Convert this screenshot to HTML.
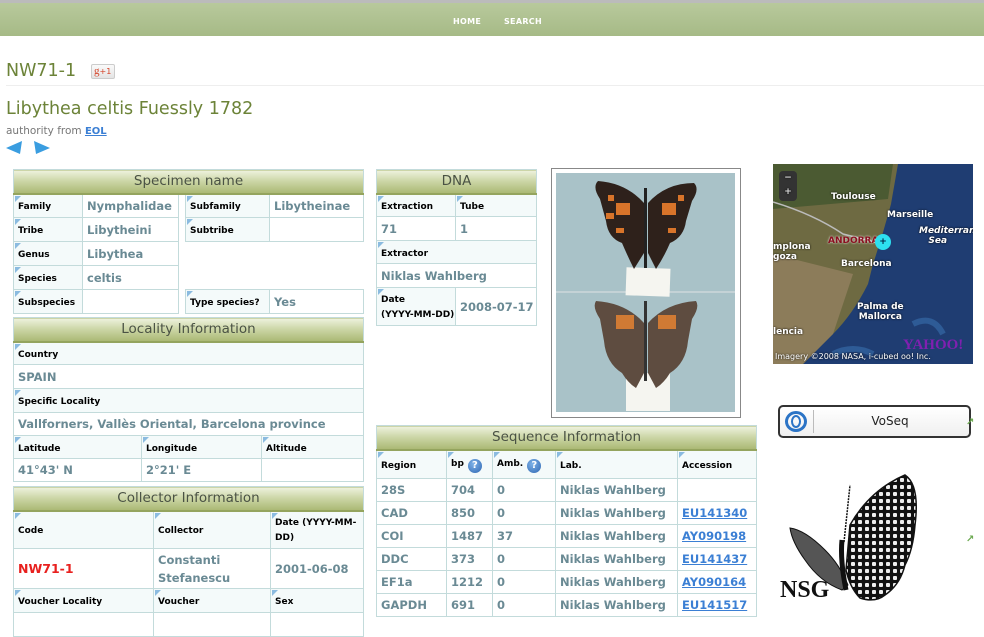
<!DOCTYPE html>
<html><head><meta charset="utf-8"><style>
*{margin:0;padding:0;box-sizing:border-box}
body{width:984px;height:615px;overflow:hidden;background:#fff;font-family:"DejaVu Sans","Liberation Sans",sans-serif;position:relative}
.a{position:absolute}
.nav{left:0;top:0;width:984px;height:36px;background:linear-gradient(#b8c99c,#a6ba86);border-top:3px solid #bbb}
.nav span{position:absolute;top:14px;color:#fff;font-size:8px;font-weight:bold;letter-spacing:.3px}
table{position:absolute;border-collapse:collapse;table-layout:fixed}
td{border:1px solid #c3dbdb;padding:0 4px;vertical-align:middle;overflow:hidden;white-space:nowrap}
th{height:24px;background:linear-gradient(#eef2de,#cdd7a8 45%,#aab873 100%);color:#4a5244;font-size:13.5px;font-weight:normal;border:1px solid #c3dbdb;border-bottom:2px solid #94a45e}
td.l{background:#f4fafa;font-size:9px;font-weight:bold;color:#000;position:relative;padding-top:3px}
td.l:before{content:"";position:absolute;left:1px;top:1px;border-top:6px solid #8bbbe0;border-right:6px solid transparent}
td.v{font-size:11.5px;font-weight:bold;color:#6a8a94}
td.n{border:none}
a{color:#3b7fd4;font-weight:bold;text-decoration:underline}
.q{display:inline-block;width:14px;height:14px;border-radius:50%;background:radial-gradient(circle at 40% 35%,#7fb3e8,#2e66b2);color:#fff;font-size:10px;text-align:center;line-height:14px;vertical-align:top;margin-left:4px}
</style></head><body>
<div class="a nav"><span style="left:453px">HOME</span><span style="left:504px">SEARCH</span></div>
<div class="a" style="left:6px;top:61px;font-size:17.5px;color:#6c8338">NW71-1</div>
<div class="a" style="left:91px;top:64px;width:24px;height:15px;border:1px solid #ccc;border-radius:2px;background:linear-gradient(#fafafa,#e4e4e4);font-size:8px;color:#d4452b;line-height:13px;padding-left:2px"><span style="font-family:'Liberation Serif';font-size:11px">g</span>+1</div>
<div class="a" style="left:6px;top:85px;width:978px;height:1px;background:#eee"></div>
<div class="a" style="left:6px;top:99px;font-size:17.5px;color:#6c8338">Libythea celtis Fuessly 1782</div>
<div class="a" style="left:6px;top:125px;font-size:10.5px;color:#777">authority from <a style="font-size:10px">EOL</a></div>
<svg class="a" style="left:6px;top:141px" width="46" height="14"><polygon points="0,7 16,0 14,13" fill="#3a9de0"/><polygon points="28,0 44,7 30,13" fill="#3a9de0"/></svg>

<table style="left:13px;top:169px;width:350px">
<col style="width:69px"><col style="width:96px"><col style="width:7px"><col style="width:84px"><col style="width:94px">
<tr><th colspan="5">Specimen name</th></tr>
<tr style="height:24px"><td class="l">Family</td><td class="v">Nymphalidae</td><td class="n"></td><td class="l">Subfamily</td><td class="v">Libytheinae</td></tr>
<tr style="height:24px"><td class="l">Tribe</td><td class="v">Libytheini</td><td class="n"></td><td class="l">Subtribe</td><td class="v"></td></tr>
<tr style="height:24px"><td class="l">Genus</td><td class="v">Libythea</td><td class="n"></td><td class="n"></td><td class="n"></td></tr>
<tr style="height:24px"><td class="l">Species</td><td class="v">celtis</td><td class="n"></td><td class="n"></td><td class="n"></td></tr>
<tr style="height:24px"><td class="l">Subspecies</td><td class="v"></td><td class="n"></td><td class="l">Type species?</td><td class="v">Yes</td></tr>
</table>

<table style="left:13px;top:317px;width:350px">
<col style="width:128px"><col style="width:120px"><col style="width:102px">
<tr><th colspan="3">Locality Information</th></tr>
<tr style="height:23px"><td class="l" colspan="3">Country</td></tr>
<tr style="height:24px"><td class="v" colspan="3">SPAIN</td></tr>
<tr style="height:24px"><td class="l" colspan="3">Specific Locality</td></tr>
<tr style="height:23px"><td class="v" colspan="3">Vallforners, Vallès Oriental, Barcelona province</td></tr>
<tr style="height:23px"><td class="l">Latitude</td><td class="l">Longitude</td><td class="l">Altitude</td></tr>
<tr style="height:23px"><td class="v">41°43' N</td><td class="v">2°21' E</td><td class="v"></td></tr>
</table>

<table style="left:13px;top:486px;width:350px">
<col style="width:140px"><col style="width:117px"><col style="width:93px">
<tr><th colspan="3">Collector Information</th></tr>
<tr style="height:38px"><td class="l">Code</td><td class="l">Collector</td><td class="l" style="white-space:normal;line-height:15px">Date (YYYY-MM-DD)</td></tr>
<tr style="height:40px"><td class="v" style="color:#e8201e;font-size:12.5px">NW71-1</td><td class="v" style="white-space:normal;line-height:18px">Constanti Stefanescu</td><td class="v">2001-06-08</td></tr>
<tr style="height:24px"><td class="l">Voucher Locality</td><td class="l">Voucher</td><td class="l">Sex</td></tr>
<tr style="height:24px"><td class="v"></td><td class="v"></td><td class="v"></td></tr>
</table>

<table style="left:376px;top:169px;width:160px">
<col style="width:79px"><col style="width:81px">
<tr><th colspan="2">DNA</th></tr>
<tr style="height:23px"><td class="l">Extraction</td><td class="l">Tube</td></tr>
<tr style="height:24px"><td class="v">71</td><td class="v">1</td></tr>
<tr style="height:23px"><td class="l" colspan="2">Extractor</td></tr>
<tr style="height:24px"><td class="v" colspan="2">Niklas Wahlberg</td></tr>
<tr style="height:38px"><td class="l" style="line-height:15px">Date<br>(YYYY-MM-DD)</td><td class="v">2008-07-17</td></tr>
</table>

<div class="a" style="left:551px;top:168px;width:190px;height:250px;border:1px solid #888;background:#fff"></div>
<div class="a" style="left:556px;top:173px;width:179px;height:239px;background:#a9c2c8">
<svg width="179" height="239">
<rect x="0" y="118" width="179" height="2" fill="#c4d2d6"/>
<rect x="70" y="95" width="44" height="28" fill="#f5f5f0" transform="rotate(2 92 110)"/>
<g fill="#2e211b">
<path d="M88 30 Q70 10 42 8 Q36 14 44 26 L50 48 Q52 65 66 70 Q72 84 78 96 L88 80 Z"/>
<path d="M92 30 Q110 10 138 10 Q144 16 136 28 L130 48 Q128 64 114 70 Q108 84 100 96 L92 80 Z"/>
</g>
<g fill="#d8742a"><rect x="52" y="22" width="6" height="6"/><rect x="60" y="30" width="14" height="12"/><rect x="50" y="40" width="8" height="6"/><rect x="106" y="30" width="14" height="12"/><rect x="122" y="22" width="6" height="6"/><rect x="60" y="55" width="8" height="5"/><rect x="112" y="55" width="8" height="5"/></g>
<rect x="88" y="15" width="3" height="80" fill="#222"/>
<rect x="70" y="200" width="44" height="38" fill="#f5f5f0"/>
<g fill="#5e4c40">
<path d="M88 150 Q70 130 40 128 Q36 134 44 146 L48 168 Q50 190 66 200 Q72 210 80 215 L88 200 Z"/>
<path d="M92 150 Q110 130 140 128 Q144 134 136 146 L132 168 Q130 190 114 200 Q108 210 100 215 L92 200 Z"/>
</g>
<g fill="#d07a34"><rect x="60" y="142" width="18" height="14"/><rect x="102" y="142" width="18" height="14"/></g>
<rect x="88" y="128" width="3" height="80" fill="#333"/>
</svg></div>

<table style="left:376px;top:425px;width:380px">
<col style="width:70px"><col style="width:46px"><col style="width:63px"><col style="width:122px"><col style="width:79px">
<tr><th colspan="5">Sequence Information</th></tr>
<tr style="height:29px"><td class="l">Region</td><td class="l">bp<span class="q">?</span></td><td class="l">Amb.<span class="q">?</span></td><td class="l">Lab.</td><td class="l">Accession</td></tr>
<tr style="height:23px"><td class="v">28S</td><td class="v">704</td><td class="v">0</td><td class="v">Niklas Wahlberg</td><td class="v"></td></tr>
<tr style="height:23px"><td class="v">CAD</td><td class="v">850</td><td class="v">0</td><td class="v">Niklas Wahlberg</td><td class="v"><a>EU141340</a></td></tr>
<tr style="height:23px"><td class="v">COI</td><td class="v">1487</td><td class="v">37</td><td class="v">Niklas Wahlberg</td><td class="v"><a>AY090198</a></td></tr>
<tr style="height:23px"><td class="v">DDC</td><td class="v">373</td><td class="v">0</td><td class="v">Niklas Wahlberg</td><td class="v"><a>EU141437</a></td></tr>
<tr style="height:23px"><td class="v">EF1a</td><td class="v">1212</td><td class="v">0</td><td class="v">Niklas Wahlberg</td><td class="v"><a>AY090164</a></td></tr>
<tr style="height:23px"><td class="v">GAPDH</td><td class="v">691</td><td class="v">0</td><td class="v">Niklas Wahlberg</td><td class="v"><a>EU141517</a></td></tr>
</table>

<div class="a" style="left:773px;top:164px;width:200px;height:200px;background:#1f3d72;overflow:hidden;font-size:9px;font-weight:bold;color:#fff;text-shadow:0 0 2px #000">
<svg class="a" style="left:0;top:0" width="200" height="200"><path d="M0 0 H125 L118 40 Q110 70 100 100 L95 120 Q80 150 60 170 L30 200 H0 Z" fill="#6e6a42"/><path d="M0 0 H120 L115 35 L0 45 Z" fill="#4b5a32"/><path d="M0 90 L80 110 L60 170 L30 200 H0 Z" fill="#8c7c5a"/><path d="M0 38 Q40 50 70 70 L110 80" stroke="#bbb" stroke-width="1.5" fill="none"/><path d="M60 190 Q80 180 100 190 M140 160 Q160 150 170 170" stroke="#2e5b96" stroke-width="6" fill="none"/></svg>
<div class="a" style="left:6px;top:7px;width:18px;height:30px;border-radius:4px;background:#333;color:#ddd;text-align:center;line-height:14px">−<br>+</div>
<span class="a" style="left:58px;top:28px">Toulouse</span>
<span class="a" style="left:114px;top:46px">Marseille</span>
<span class="a" style="left:146px;top:62px;font-style:italic">Mediterran<br>&nbsp;&nbsp;&nbsp;Sea</span>
<span class="a" style="left:55px;top:72px;color:#8a1020;text-shadow:0 0 2px #fff">ANDORRA</span>
<span class="a" style="left:68px;top:95px">Barcelona</span>
<span class="a" style="left:84px;top:138px;text-align:center">Palma de<br>Mallorca</span>
<span class="a" style="left:0;top:88px">goza</span>
<span class="a" style="left:0;top:163px">lencia</span>
<span class="a" style="left:0;top:78px">mplona</span>
<div class="a" style="left:102px;top:70px;width:16px;height:16px;border-radius:50%;background:#2de0f0;color:#024;text-shadow:none;text-align:center;line-height:16px">+</div>
<span class="a" style="left:130px;top:173px;color:#8020b0;font-size:15px;text-shadow:none;font-family:'Liberation Serif'">YAHOO!</span>
<span class="a" style="left:2px;top:188px;font-weight:normal;font-size:8px">Imagery ©2008 NASA, i-cubed  oo! Inc.</span>
</div>

<div class="a" style="left:778px;top:405px;width:193px;height:33px;border:2px solid #333;border-radius:5px;background:linear-gradient(#fff,#f0f0f0);">
<div class="a" style="left:5px;top:4px;width:22px;height:21px;border-radius:50%;border:3px solid #2b74c6"></div>
<div class="a" style="left:11px;top:8px;width:10px;height:13px;border-radius:50%;border:2px solid #2b74c6"></div>
<div class="a" style="left:33px;top:3px;width:1px;height:23px;background:#bbb"></div>
<div class="a" style="left:0;top:7px;width:190px;text-align:center;font-size:12px;color:#222;font-family:'DejaVu Sans';padding-left:30px">VoSeq</div>
</div>
<div class="a" style="left:966px;top:417px;color:#6aa84f;font-size:10px;font-weight:bold">↗</div>
<div class="a" style="left:966px;top:534px;color:#6aa84f;font-size:10px;font-weight:bold">↗</div>

<svg class="a" style="left:780px;top:470px" width="140" height="135">
<defs><pattern id="p" width="7" height="7" patternUnits="userSpaceOnUse"><rect width="7" height="7" fill="#111"/><rect x="1" y="1" width="4" height="4" rx="1" fill="#eee"/></pattern></defs>
<path d="M70 55 Q90 20 125 5 Q140 15 135 55 Q133 80 125 95 Q120 115 105 125 Q95 133 80 128 Q70 118 66 100 Z" fill="url(#p)" stroke="#111" stroke-width="1.5"/>
<path d="M10 58 Q25 60 45 80 Q60 95 68 115 L62 120 Q40 112 25 90 Q12 72 10 58 Z" fill="#555" stroke="#111"/>
<path d="M62 70 Q60 90 66 120" stroke="#111" stroke-width="5"/>
<path d="M64 72 L70 15" stroke="#111" stroke-width="1.5" stroke-dasharray="2 1"/>
<text x="0" y="127" font-family="Liberation Serif" font-size="24" font-weight="bold" fill="#111">NSG</text>
</svg>
</body></html>
